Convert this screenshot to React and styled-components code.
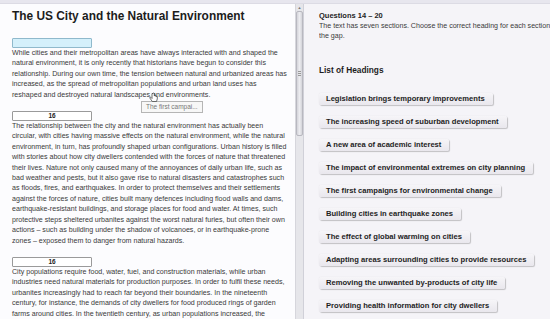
import React from 'react'
import styled, { createGlobalStyle } from 'styled-components'

const GlobalStyle = createGlobalStyle`
  html, body {
    margin: 0;
    padding: 0;
    background: #f5f4f8;
  }
  * { box-sizing: border-box; }
`

const Screen = styled.div`
  width: 550px;
  height: 319px;
  overflow: hidden;
  display: flex;
  flex-direction: column;
  font-family: "Liberation Sans", Arial, sans-serif;
  color: #333;
  background: #f5f4f8;
`

const TopStrip = styled.div`
  height: 4px;
  flex: none;
  background: #e7e6ee;
  border-bottom: 1px solid #dcdbe4;
`

const Split = styled.div`
  flex: 1;
  display: flex;
  min-height: 0;
`

const ReadingPane = styled.div`
  position: relative;
  width: 295px;
  flex: none;
  background: #fcfcfe;
  padding: 5px 0 0 12px;
  overflow: hidden;
`

const Title = styled.h1`
  margin: 0;
  font-size: 11.9px;
  line-height: 14px;
  font-weight: bold;
  color: #1c1c1c;
  white-space: nowrap;
`

const GapBox = styled.div`
  width: 80px;
  height: 10px;
  margin-top: ${p => p.$top}px;
  border: 1px solid ${p => (p.$active ? '#8fb9cc' : '#9a9a9a')};
  background: ${p => (p.$active ? '#d4f0fb' : '#ffffff')};
  border-radius: 1px;
  font-size: 6.5px;
  line-height: 8px;
  font-weight: bold;
  text-align: center;
  color: #222;
`

const Paragraph = styled.p`
  margin: 0;
  font-size: 7.1px;
  line-height: 10.4px;
  color: #3a3a3a;
`

const Line = styled.span`
  display: block;
  white-space: nowrap;
`

const Tooltip = styled.div`
  position: absolute;
  left: 141px;
  top: 97px;
  padding: 0 4px;
  height: 12px;
  border: 1px solid #b5b5b5;
  background: #f7f7f7;
  font-size: 6.5px;
  line-height: 10px;
  color: #777;
  white-space: nowrap;
`

const Cursor = styled.svg`
  position: absolute;
  left: 149px;
  top: 88px;
`

const ScrollTrack = styled.div`
  width: 9px;
  flex: none;
  background: #e6e6ea;
  border-left: 1px solid #d6d6dc;
  border-right: 1px solid #d0d0d8;
  display: flex;
  flex-direction: column;
  align-items: center;
`

const ScrollArrow = styled.div`
  height: 7px;
  font-size: 4px;
  line-height: 7px;
  color: #777;
`

const ScrollThumb = styled.div`
  width: 7px;
  height: 125px;
  background: linear-gradient(90deg, #d4d4da, #ececf0 50%, #d4d4da);
  border: 1px solid #b8b8c0;
  border-radius: 2px;
  display: flex;
  align-items: center;
  justify-content: center;
`

const Grip = styled.div`
  width: 3px;
  height: 5px;
  border-top: 1px solid #999;
  border-bottom: 1px solid #999;
  position: relative;
  &::after {
    content: '';
    position: absolute;
    left: 0;
    right: 0;
    top: 1px;
    border-top: 1px solid #999;
  }
`

const QuestionPane = styled.div`
  flex: 1;
  padding: 7px 0 0 15px;
  background: #f5f4f8;
  overflow: hidden;
  min-width: 0;
`

const QuestionsLabel = styled.div`
  font-size: 7.5px;
  line-height: 10px;
  font-weight: bold;
  color: #1e1e1e;
  white-space: nowrap;
`

const Instructions = styled.div`
  font-size: 7.1px;
  line-height: 10px;
  color: #3a3a3a;
  overflow: hidden;
`

const ListTitle = styled.h2`
  margin: 23px 0 0;
  font-size: 8.3px;
  line-height: 12px;
  font-weight: bold;
  color: #1e1e1e;
`

const HeadingList = styled.div`
  margin-top: 17px;
  display: flex;
  flex-direction: column;
  align-items: flex-start;
  gap: 11px;
`

const HeadingChip = styled.div`
  height: 12px;
  padding: 0 8px 0 7px;
  background: linear-gradient(180deg, #f6f5f8, #e9e7ed);
  border-radius: 2px;
  box-shadow: 1px 1px 1px rgba(0, 0, 0, 0.2), 0 0 1px rgba(0, 0, 0, 0.12);
  font-size: 7.6px;
  line-height: 12px;
  font-weight: bold;
  color: #1e1e1e;
  white-space: nowrap;
`

const para1 = [
  'While cities and their metropolitan areas have always interacted with and shaped the',
  'natural environment, it is only recently that historians have begun to consider this',
  'relationship. During our own time, the tension between natural and urbanized areas has',
  'increased, as the spread of metropolitan populations and urban land uses has',
  'reshaped and destroyed natural landscapes and environments.',
]

const para2 = [
  'The relationship between the city and the natural environment has actually been',
  'circular, with cities having massive effects on the natural environment, while the natural',
  'environment, in turn, has profoundly shaped urban configurations. Urban history is filled',
  'with stories about how city dwellers contended with the forces of nature that threatened',
  'their lives. Nature not only caused many of the annoyances of daily urban life, such as',
  'bad weather and pests, but it also gave rise to natural disasters and catastrophes such',
  'as floods, fires, and earthquakes. In order to protect themselves and their settlements',
  'against the forces of nature, cities built many defences including flood walls and dams,',
  'earthquake-resistant buildings, and storage places for food and water. At times, such',
  'protective steps sheltered urbanites against the worst natural furies, but often their own',
  'actions \u2013 such as building under the shadow of volcanoes, or in earthquake-prone',
  'zones \u2013 exposed them to danger from natural hazards.',
]

const para3 = [
  'City populations require food, water, fuel, and construction materials, while urban',
  'industries need natural materials for production purposes. In order to fulfil these needs,',
  'urbanites increasingly had to reach far beyond their boundaries. In the nineteenth',
  'century, for instance, the demands of city dwellers for food produced rings of garden',
  'farms around cities. In the twentieth century, as urban populations increased, the',
]

const headings = [
  'Legislation brings temporary improvements',
  'The increasing speed of suburban development',
  'A new area of academic interest',
  'The impact of environmental extremes on city planning',
  'The first campaigns for environmental change',
  'Building cities in earthquake zones',
  'The effect of global warming on cities',
  'Adapting areas surrounding cities to provide resources',
  'Removing the unwanted by-products of city life',
  'Providing health information for city dwellers',
]

const Text = ({ lines }) => (
  <Paragraph>
    {lines.map((l, i) => <Line key={i}>{l}</Line>)}
  </Paragraph>
)

export default function App() {
  return (
    <>
      <GlobalStyle />
      <Screen>
        <TopStrip />
        <Split>
          <ReadingPane>
            <Title>The US City and the Natural Environment</Title>
            <GapBox $active $top={15} />
            <Text lines={para1} />
            <GapBox $top={11}>16</GapBox>
            <Text lines={para2} />
            <GapBox $top={11}>16</GapBox>
            <Text lines={para3} />
            <Tooltip>The first campai...</Tooltip>
            <Cursor width="9" height="11" viewBox="0 0 9 11">
              <path d="M3 1.5 v5 l-1.2 -1.2 c-.6 -.5 -1.4 .2 -.9 .8 l2.4 3.4 h4.2 l.8 -2.6 v-2.2 c0 -.7 -1 -.7 -1 0 v-.5 c0 -.7 -1 -.7 -1 0 v-.3 c0 -.7 -1 -.7 -1 0 v-2.4 c0 -.7 -1.3 -.7 -1.3 0 z" fill="#fff" stroke="#333" strokeWidth="0.7" />
            </Cursor>
          </ReadingPane>
          <ScrollTrack>
            <ScrollArrow>▲</ScrollArrow>
            <ScrollThumb><Grip /></ScrollThumb>
          </ScrollTrack>
          <QuestionPane>
            <QuestionsLabel>Questions 14 – 20</QuestionsLabel>
            <Instructions>
              <Line>The text has seven sections. Choose the correct heading for each section and move it into</Line>
              <Line>the gap.</Line>
            </Instructions>
            <ListTitle>List of Headings</ListTitle>
            <HeadingList>
              {headings.map(h => <HeadingChip key={h}>{h}</HeadingChip>)}
            </HeadingList>
          </QuestionPane>
        </Split>
      </Screen>
    </>
  )
}
